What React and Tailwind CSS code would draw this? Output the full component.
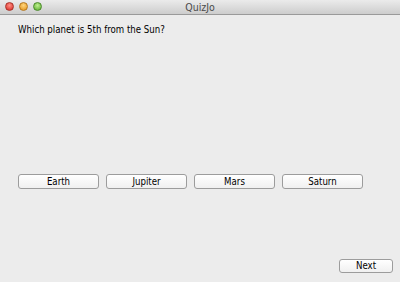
export default function App() {
  const answers = ["Earth", "Jupiter", "Mars", "Saturn"];
  const cond = { fontFamily: '"DejaVu Sans Condensed", "DejaVu Sans", sans-serif', fontStretch: "semi-condensed" };
  return (
    <div className="w-[400px] h-[282px] flex flex-col bg-[#ececec] overflow-hidden" style={{ fontFamily: '"Liberation Sans", Arial, sans-serif' }}>
      <div className="relative h-[15px] flex items-center justify-center bg-gradient-to-b from-[#ebebeb] to-[#cdcdcd] border-b border-[#9a9a9a]">
        <div className="absolute left-[5px] top-[2px] flex gap-[5px]">
          <div className="w-[9px] h-[9px] rounded-full bg-[radial-gradient(circle_at_50%_35%,#ff8f85,#d8271f)] border border-[#a8342c]" />
          <div className="w-[9px] h-[9px] rounded-full bg-[radial-gradient(circle_at_50%_35%,#ffd67e,#e39216)] border border-[#b5781e]" />
          <div className="w-[9px] h-[9px] rounded-full bg-[radial-gradient(circle_at_50%_35%,#bff08f,#56a92a)] border border-[#4a8a2a]" />
        </div>
        <span className="text-[10.5px] leading-none text-[#4a4a4a]" style={cond}>QuizJo</span>
      </div>
      <div className="flex-1 flex flex-col px-[18px]">
        <div className="pt-[9px] text-[9.6px] leading-[12px] text-[#000]" style={cond}>Which planet is 5th from the Sun?</div>
        <div className="mt-[138px] flex gap-[7px]">
          {answers.map((a) => (
            <div key={a} className="w-[81px] h-[15px] flex items-center justify-center rounded-[3px] border border-[#9c9c9c] bg-gradient-to-b from-white to-[#f0f0f0] text-[9.6px] leading-none text-[#000]" style={cond}>
              {a}
            </div>
          ))}
        </div>
        <div className="mt-auto mb-[9px] flex justify-end">
          <div className="w-[54px] h-[14px] -mr-[11px] flex items-center justify-center rounded-[3px] border border-[#9c9c9c] bg-gradient-to-b from-white to-[#f0f0f0] text-[9.6px] leading-none text-[#000]" style={cond}>
            Next
          </div>
        </div>
      </div>
    </div>
  );
}
